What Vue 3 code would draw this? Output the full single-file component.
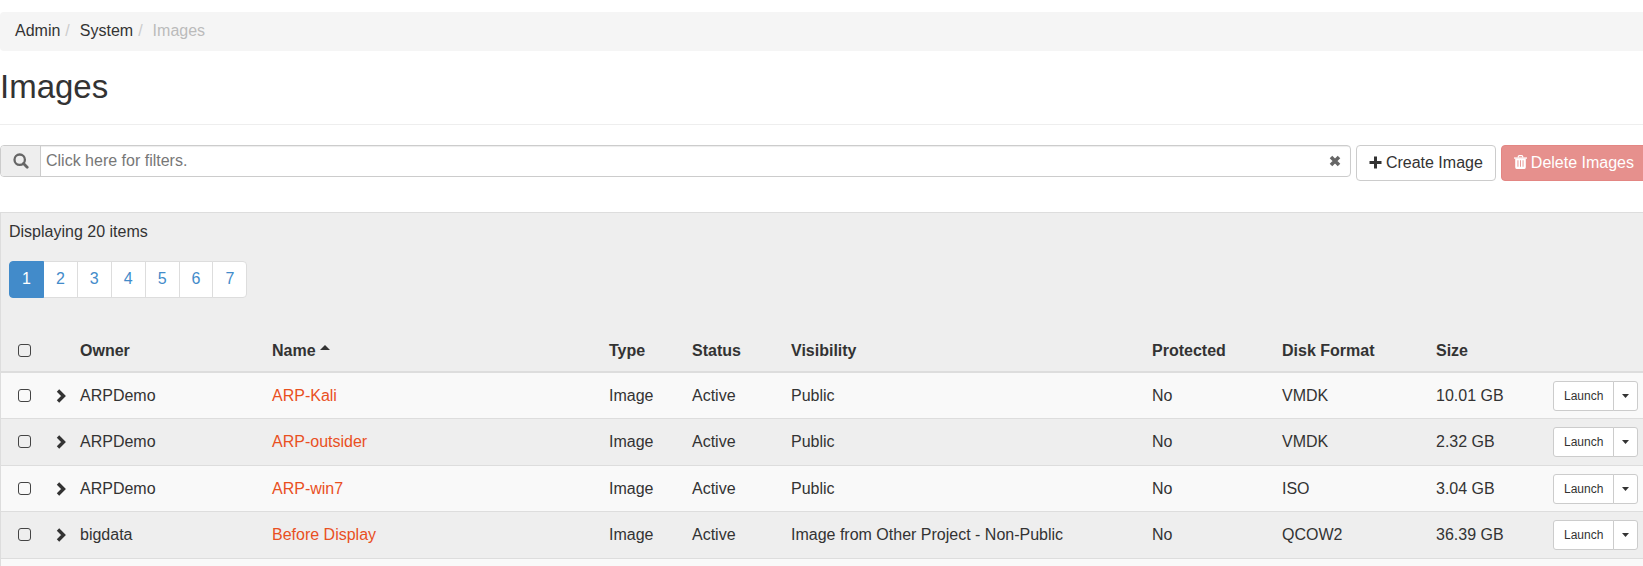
<script setup>
import { ref } from 'vue'

const pages = [1, 2, 3, 4, 5, 6, 7]
const current = ref(1)
const filter = ref('')
const rows = [
  { owner: 'ARPDemo', name: 'ARP-Kali', visibility: 'Public', format: 'VMDK', size: '10.01 GB' },
  { owner: 'ARPDemo', name: 'ARP-outsider', visibility: 'Public', format: 'VMDK', size: '2.32 GB' },
  { owner: 'ARPDemo', name: 'ARP-win7', visibility: 'Public', format: 'ISO', size: '3.04 GB' },
  { owner: 'bigdata', name: 'Before Display', visibility: 'Image from Other Project - Non-Public', format: 'QCOW2', size: '36.39 GB' },
]
</script>

<template>
  <div class="page">
    <nav aria-label="Breadcrumb">
      <ol class="breadcrumb">
        <li><a href="#">Admin</a></li>
        <li><a href="#">System</a></li>
        <li class="active">Images</li>
      </ol>
    </nav>

    <h1>Images</h1>

    <div class="toolbar">
      <div class="search">
        <label class="addon" for="filter" aria-label="Filters">
          <svg width="16" height="16" viewBox="0 0 16 16"><circle cx="6.700" cy="6.700" r="5.200" fill="none" stroke="currentColor" stroke-width="2.300" /><path d="M10.500 10.500l3.700 3.700" stroke="currentColor" stroke-width="2.800" stroke-linecap="round" /></svg>
        </label>
        <div class="field">
          <input id="filter" v-model="filter" type="text" placeholder="Click here for filters.">
          <button class="clear" type="button" aria-label="Clear filters" @click="filter = ''">
            <svg width="12" height="12" viewBox="0 0 12 12"><path d="M2 2l8 8M10 2l-8 8" stroke="currentColor" stroke-width="3.600" /></svg>
          </button>
        </div>
      </div>
      <button class="btn" type="button">
        <svg width="13" height="13" viewBox="0 0 13 13"><path d="M6.500 0.500v12M0.500 6.500h12" stroke="currentColor" stroke-width="3" stroke-linecap="butt" /></svg>
        <span>Create Image</span>
      </button>
      <button class="btn danger" type="button" disabled>
        <svg width="13" height="14" viewBox="0 0 13 14"><path d="M4.3 2.5V1.6q0-1 1-1h2.4q1 0 1 1v.9" fill="none" stroke="currentColor" stroke-width="1.2" /><path d="M0 2.4h13v1.3H0z" fill="currentColor" /><path fill-rule="evenodd" d="M1.2 3.5h10.6v8.8q0 1.7-1.4 1.7H2.6q-1.4 0-1.4-1.7zM3.5 5.2v6.600h.9V5.2zM6 5.2v6.600h.9V5.2zM8.600 5.2v6.600h.9V5.2z" fill="currentColor" /></svg>
        <span>Delete Images</span>
      </button>
    </div>

    <section class="panel">
      <p class="count">Displaying 20 items</p>
      <ul class="pagination">
        <li v-for="p in pages" :key="p">
          <a href="#" :class="{ current: p === current }" @click.prevent="current = p">{{ p }}</a>
        </li>
      </ul>
      <table>
        <colgroup>
          <col class="c-check"><col class="c-chev"><col class="c-owner"><col class="c-name"><col class="c-type"><col class="c-status"><col><col class="c-prot"><col class="c-disk"><col class="c-size"><col class="c-act">
        </colgroup>
        <thead>
          <tr>
            <th class="check"><input type="checkbox" aria-label="Select all images"></th>
            <th></th>
            <th>Owner</th>
            <th>Name <svg class="sort" width="10" height="5" viewBox="0 0 10 5"><path d="M0 5l5-5 5 5z" fill="currentColor" /></svg></th>
            <th>Type</th>
            <th>Status</th>
            <th>Visibility</th>
            <th>Protected</th>
            <th>Disk Format</th>
            <th>Size</th>
            <th></th>
          </tr>
        </thead>
        <tbody>
          <tr v-for="r in rows" :key="r.name">
            <td class="check"><input type="checkbox" :aria-label="'Select ' + r.name"></td>
            <td>
              <button class="expand" type="button" :aria-label="'Expand ' + r.name">
                <svg width="11" height="14" viewBox="0 0 11 14"><path d="M2 1.500L7.500 7l-5.500 5.500" fill="none" stroke="currentColor" stroke-width="3.400" /></svg>
              </button>
            </td>
            <td>{{ r.owner }}</td>
            <td><a class="name" href="#">{{ r.name }}</a></td>
            <td>Image</td>
            <td>Active</td>
            <td>{{ r.visibility }}</td>
            <td>No</td>
            <td>{{ r.format }}</td>
            <td>{{ r.size }}</td>
            <td>
              <div class="split">
                <button type="button">Launch</button>
                <button class="more" type="button" aria-label="More actions">
                  <svg width="7" height="4" viewBox="0 0 7 4"><path d="M0 0h7L3.500 4z" fill="currentColor" /></svg>
                </button>
              </div>
            </td>
          </tr>
        </tbody>
        <tfoot>
          <tr><td colspan="11"></td></tr>
        </tfoot>
      </table>
    </section>
  </div>
</template>

<style>
body {
  background: #fff;
  overflow: hidden;
}
</style>

<style scoped>
.page {
  padding-top: 12px;
  color: #333;
  font: 16px/23px "Liberation Sans", Arial, sans-serif;
}
.page * {
  box-sizing: border-box;
}
a {
  text-decoration: none;
}
svg {
  display: block;
  flex: none;
}
button,
input {
  font: inherit;
  color: inherit;
  margin: 0;
}
.breadcrumb {
  display: flex;
  margin: 0;
  padding: 7px 15px 9px;
  list-style: none;
  background: #f5f5f5;
  border-radius: 4px 0 0 4px;
}
.breadcrumb a {
  color: #333;
}
.breadcrumb li + li::before {
  content: "/";
  padding: 0 10px 0 5px;
  color: #ccc;
}
.breadcrumb .active {
  color: #bbb;
}
h1 {
  margin: 0 0 20px;
  padding: 17px 0 19px;
  border-bottom: 1px solid #eee;
  font-size: 33px;
  line-height: 37px;
  font-weight: 400;
}
.toolbar {
  display: flex;
  align-items: flex-start;
  gap: 5px;
  margin: 0 -4px 31px 0;
}
.search {
  display: flex;
  flex: 1;
  height: 32px;
  border: 1px solid #ccc;
  border-radius: 4px;
  overflow: hidden;
}
.addon {
  display: flex;
  align-items: center;
  justify-content: center;
  width: 40px;
  background: #eee;
  border-right: 1px solid #ccc;
  color: #666;
}
.field {
  display: flex;
  flex: 1;
  align-items: center;
  padding-right: 9px;
  box-shadow: inset 0 1px 1px rgba(0, 0, 0, 0.075);
}
.field input {
  flex: 1;
  height: 28px;
  padding: 0 5px;
  border: 0;
  outline: 0;
  background: transparent;
}
.field input::placeholder {
  color: #777;
  opacity: 1;
}
.clear {
  padding: 0;
  border: 0;
  background: none;
  color: #666;
}
.btn {
  display: flex;
  align-items: center;
  gap: 4px;
  height: 36px;
  padding: 0 12px 2px;
  border: 1px solid #ccc;
  border-radius: 4px;
  background: #fff;
  white-space: nowrap;
}
.danger {
  color: #fff;
  background: #e6908d;
  border-color: #e38683;
}
.panel {
  background: #eee;
  border: solid #ddd;
  border-width: 1px 0 0 1px;
}
.count {
  margin: 0;
  padding: 7px 8px;
}
.pagination {
  display: flex;
  margin: 11px 8px 31px;
  padding: 0;
  list-style: none;
}
.pagination a {
  display: block;
  margin-left: -1px;
  padding: 5px 12px 7px;
  border: 1px solid #ddd;
  background: #fff;
  color: #428bca;
}
.pagination li:first-child a {
  margin-left: 0;
  border-radius: 4px 0 0 4px;
}
.pagination li:last-child a {
  border-radius: 0 4px 4px 0;
}
.pagination a.current {
  position: relative;
  z-index: 1;
  color: #fff;
  background: #428bca;
  border-color: #428bca;
}
table {
  width: 100%;
  table-layout: fixed;
  border-collapse: separate;
  border-spacing: 0;
}
.c-check { width: 47px; }
.c-chev { width: 24px; }
.c-owner { width: 192px; }
.c-name { width: 337px; }
.c-type { width: 83px; }
.c-status { width: 99px; }
.c-prot { width: 130px; }
.c-disk { width: 154px; }
.c-size { width: 117px; }
.c-act { width: 98px; }
th,
td {
  padding: 0 8px;
  text-align: left;
  vertical-align: middle;
  white-space: nowrap;
}
th {
  height: 44px;
  border-bottom: 2px solid #ddd;
}
td {
  height: 46px;
  border-bottom: 1px solid #ddd;
  background: #f9f9f9;
}
tbody tr:nth-child(even) td {
  height: 47px;
  padding-bottom: 1px;
  background: #eee;
}
tfoot td {
  height: 7px;
  border: 0;
}
th.check,
td.check {
  padding-left: 17px;
}
.check input {
  display: block;
  width: 13px;
  height: 13px;
  appearance: none;
  border: 1px solid #444;
  border-radius: 3px;
  background: transparent;
}
.check input:checked {
  background: #428bca;
}
.sort {
  display: inline-block;
  vertical-align: 6px;
}
.expand {
  display: block;
  padding: 0;
  border: 0;
  background: none;
}
.name {
  color: #e9501f;
}
.split {
  display: flex;
}
.split button {
  height: 30px;
  padding: 0 10px;
  border: 1px solid #ccc;
  border-radius: 3px 0 0 3px;
  background: #fff;
  font-size: 12px;
  line-height: 18px;
}
.split .more {
  margin-left: -1px;
  padding: 0 8px;
  border-radius: 0 3px 3px 0;
}
</style>
